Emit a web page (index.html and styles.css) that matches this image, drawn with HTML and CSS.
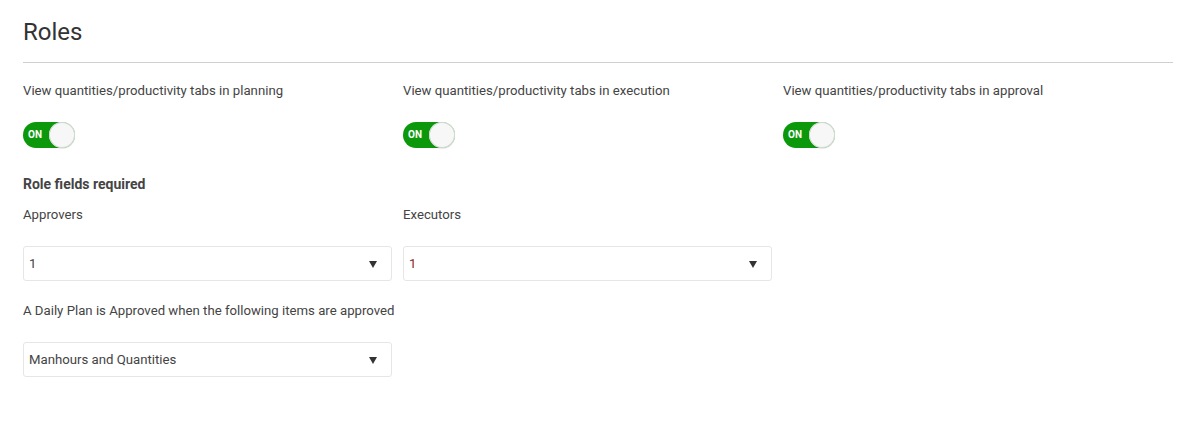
FILE: index.html
```html
<!DOCTYPE html>
<html>
<head>
<meta charset="utf-8">
<link rel="stylesheet" href="styles.css">
</head>
<body>
<div class="page">
  <div class="header"><h1 class="title">Roles</h1></div>

  <div class="grid toggles">
    <div class="field">
      <div class="label">View quantities/productivity tabs in planning</div>
      <div class="toggle"><span class="on">ON</span><span class="knob"></span></div>
    </div>
    <div class="field">
      <div class="label">View quantities/productivity tabs in execution</div>
      <div class="toggle"><span class="on">ON</span><span class="knob"></span></div>
    </div>
    <div class="field">
      <div class="label">View quantities/productivity tabs in approval</div>
      <div class="toggle"><span class="on">ON</span><span class="knob"></span></div>
    </div>
  </div>

  <div class="section">Role fields required</div>

  <div class="grid">
    <div class="field">
      <div class="label">Approvers</div>
      <div class="select"><span class="value">1</span><span class="caret"></span></div>
    </div>
    <div class="field">
      <div class="label">Executors</div>
      <div class="select"><span class="value red">1</span><span class="caret"></span></div>
    </div>
  </div>

  <div class="grid daily">
    <div class="field">
      <div class="label">A Daily Plan is Approved when the following items are approved</div>
      <div class="select"><span class="value">Manhours and Quantities</span><span class="caret"></span></div>
    </div>
  </div>
</div>
</body>
</html>
```

FILE: styles.css
```css
* { box-sizing: border-box; }
html, body { margin: 0; padding: 0; background: #fff; }
body {
  font-family: Roboto, "Liberation Sans", sans-serif;
  color: #444;
  font-size: 13px;
}
.page { padding: 0 9px 0 23px; }
.header {
  padding-top: 18px;
  padding-bottom: 16px;
  border-bottom: 1px solid #cfcfcf;
}
.title {
  margin: 0;
  font-size: 24px;
  line-height: 28px;
  font-weight: 400;
  color: #333;
}
.grid {
  display: grid;
  grid-template-columns: repeat(3, 369px);
  column-gap: 11px;
}
.toggles { margin-top: 19px; }
.label {
  font-size: 13.2px;
  line-height: 18px;
  color: #444;
  white-space: nowrap;
}
.toggle {
  margin-top: 22px;
  width: 52px;
  height: 26px;
  border-radius: 13px;
  background: #0b990b;
  position: relative;
}
.on {
  position: absolute;
  left: 5px;
  top: 0;
  line-height: 26px;
  font-size: 10px;
  font-weight: 700;
  color: #fff;
}
.knob {
  position: absolute;
  right: 0;
  top: 0;
  width: 26px;
  height: 26px;
  border-radius: 50%;
  background: #f7f7f7;
  box-shadow: inset 0 0 0 1px #cfd8cf, 0 1px 1px rgba(0,0,0,0.1);
}
.section {
  margin-top: 27px;
  font-size: 14px;
  line-height: 18px;
  font-weight: 700;
  color: #444;
}
.section + .grid { margin-top: 13px; }
.select {
  margin-top: 22px;
  height: 35px;
  border: 1px solid #e6e6e6;
  border-radius: 3px;
  display: flex;
  align-items: center;
  justify-content: space-between;
  padding: 0 14px 0 5px;
}
.value { font-size: 13.2px; color: #444; }
.value.red { color: #8a2a1c; }
.caret {
  width: 0;
  height: 0;
  border-left: 4.5px solid transparent;
  border-right: 4.5px solid transparent;
  border-top: 7px solid #333;
  margin-top: 2px;
}
.daily { margin-top: 21px; }
```
